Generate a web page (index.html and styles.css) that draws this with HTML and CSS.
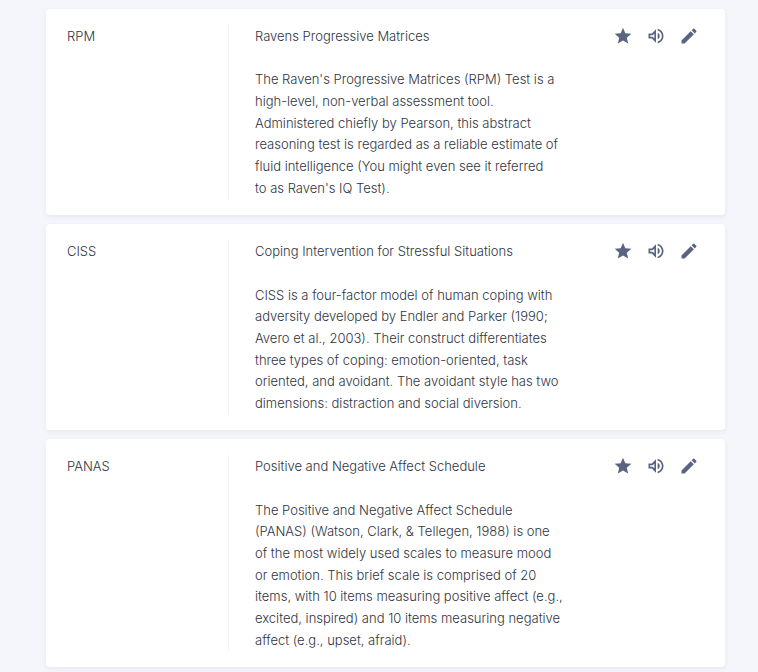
FILE: index.html
```html
<!DOCTYPE HTML>
<html lang='en'>
<head>
<meta charset='utf-8'>
<title>Tests</title>
<link rel="stylesheet" href="styles.css">
</head>
<body>
<div class='list'>
<div class='card card_stub'></div>

<!--RPM-->
<div class='card'>
<div class='code'>RPM</div>
<div class='details'>
<div class='title'>Ravens Progressive Matrices</div>
<div class='description'>The Raven's Progressive Matrices (RPM) Test is a<br>high-level, non-verbal assessment tool.<br>Administered chiefly by Pearson, this abstract<br>reasoning test is regarded as a reliable estimate of<br>fluid intelligence (You might even see it referred<br>to as Raven's IQ Test).</div>
</div>
<div class='actions'>
<svg class='icon' viewBox='0 0 24 24'><path d='M12 17.27 18.18 21l-1.64-7.03L22 9.24l-7.19-.61L12 2 9.19 8.63 2 9.24l5.46 4.73L5.82 21z'/></svg>
<svg class='icon' viewBox='0 0 24 24'><path d='M14 3.23v2.06c2.89.86 5 3.54 5 6.71s-2.11 5.85-5 6.71v2.06c4.01-.91 7-4.49 7-8.77s-2.99-7.86-7-8.77zM16.5 12c0-1.77-1.02-3.29-2.5-4.03v8.05c1.48-.73 2.5-2.25 2.5-4.02zM3 9v6h4l5 5V4L7 9H3zm7 .17v5.66L7.83 13H5v-2h2.83L10 9.17z'/></svg>
<svg class='icon' viewBox='0 0 24 24'><path d='M3 17.25V21h3.75L17.81 9.94l-3.75-3.75L3 17.25zM20.71 7.04a1 1 0 0 0 0-1.41l-2.34-2.34a1 1 0 0 0-1.41 0l-1.83 1.83 3.75 3.75 1.83-1.83z'/></svg>
</div>
</div>

<!--CISS-->
<div class='card'>
<div class='code'>CISS</div>
<div class='details'>
<div class='title'>Coping Intervention for Stressful Situations</div>
<div class='description'>CISS is a four-factor model of human coping with<br>adversity developed by Endler and Parker (1990;<br>Avero et al., 2003). Their construct differentiates<br>three types of coping: emotion-oriented, task<br>oriented, and avoidant. The avoidant style has two<br>dimensions: distraction and social diversion.</div>
</div>
<div class='actions'>
<svg class='icon' viewBox='0 0 24 24'><path d='M12 17.27 18.18 21l-1.64-7.03L22 9.24l-7.19-.61L12 2 9.19 8.63 2 9.24l5.46 4.73L5.82 21z'/></svg>
<svg class='icon' viewBox='0 0 24 24'><path d='M14 3.23v2.06c2.89.86 5 3.54 5 6.71s-2.11 5.85-5 6.71v2.06c4.01-.91 7-4.49 7-8.77s-2.99-7.86-7-8.77zM16.5 12c0-1.77-1.02-3.29-2.5-4.03v8.05c1.48-.73 2.5-2.25 2.5-4.02zM3 9v6h4l5 5V4L7 9H3zm7 .17v5.66L7.83 13H5v-2h2.83L10 9.17z'/></svg>
<svg class='icon' viewBox='0 0 24 24'><path d='M3 17.25V21h3.75L17.81 9.94l-3.75-3.75L3 17.25zM20.71 7.04a1 1 0 0 0 0-1.41l-2.34-2.34a1 1 0 0 0-1.41 0l-1.83 1.83 3.75 3.75 1.83-1.83z'/></svg>
</div>
</div>

<!--PANAS-->
<div class='card'>
<div class='code'>PANAS</div>
<div class='details'>
<div class='title'>Positive and Negative Affect Schedule</div>
<div class='description'>The Positive and Negative Affect Schedule<br>(PANAS) (Watson, Clark, &amp; Tellegen, 1988) is one<br>of the most widely used scales to measure mood<br>or emotion. This brief scale is comprised of 20<br>items, with 10 items measuring positive affect (e.g.,<br>excited, inspired) and 10 items measuring negative<br>affect (e.g., upset, afraid).</div>
</div>
<div class='actions'>
<svg class='icon' viewBox='0 0 24 24'><path d='M12 17.27 18.18 21l-1.64-7.03L22 9.24l-7.19-.61L12 2 9.19 8.63 2 9.24l5.46 4.73L5.82 21z'/></svg>
<svg class='icon' viewBox='0 0 24 24'><path d='M14 3.23v2.06c2.89.86 5 3.54 5 6.71s-2.11 5.85-5 6.71v2.06c4.01-.91 7-4.49 7-8.77s-2.99-7.86-7-8.77zM16.5 12c0-1.77-1.02-3.29-2.5-4.03v8.05c1.48-.73 2.5-2.25 2.5-4.02zM3 9v6h4l5 5V4L7 9H3zm7 .17v5.66L7.83 13H5v-2h2.83L10 9.17z'/></svg>
<svg class='icon' viewBox='0 0 24 24'><path d='M3 17.25V21h3.75L17.81 9.94l-3.75-3.75L3 17.25zM20.71 7.04a1 1 0 0 0 0-1.41l-2.34-2.34a1 1 0 0 0-1.41 0l-1.83 1.83 3.75 3.75 1.83-1.83z'/></svg>
</div>
</div>
</div>
</body>
</html>
```

FILE: styles.css
```css
html, body
{
margin:0;
height:672px;
overflow:hidden;
background:#f4f6fb;
}
body
{
font-family:"Inter","Lato",sans-serif;
font-size:13px;
font-weight:300;
line-height:21.65px;
color:#2f3442;
}
.list
{
display:flex;
flex-direction:column;
gap:9px;
margin:0 33px 0 46px;
}
.card
{
display:flex;
padding:17px 0 16px 21px;
background:#ffffff;
border-radius:4px;
box-shadow:0 2px 5px rgba(70,80,120,0.08);
}
.card_stub
{
height:0;
padding:0;
}
.code
{
width:161px;
flex:none;
}
.details
{
width:306px;
flex:none;
margin-top:-1px;
padding:1px 0 0 26px;
border-left:1px solid #f2f3f6;
}
.title
{
margin-bottom:21.65px;
}
.description
{
white-space:nowrap;
}
.actions
{
display:flex;
gap:13px;
margin-left:52px;
}
.icon
{
width:20px;
height:20px;
fill:#5a6482;
}
```
